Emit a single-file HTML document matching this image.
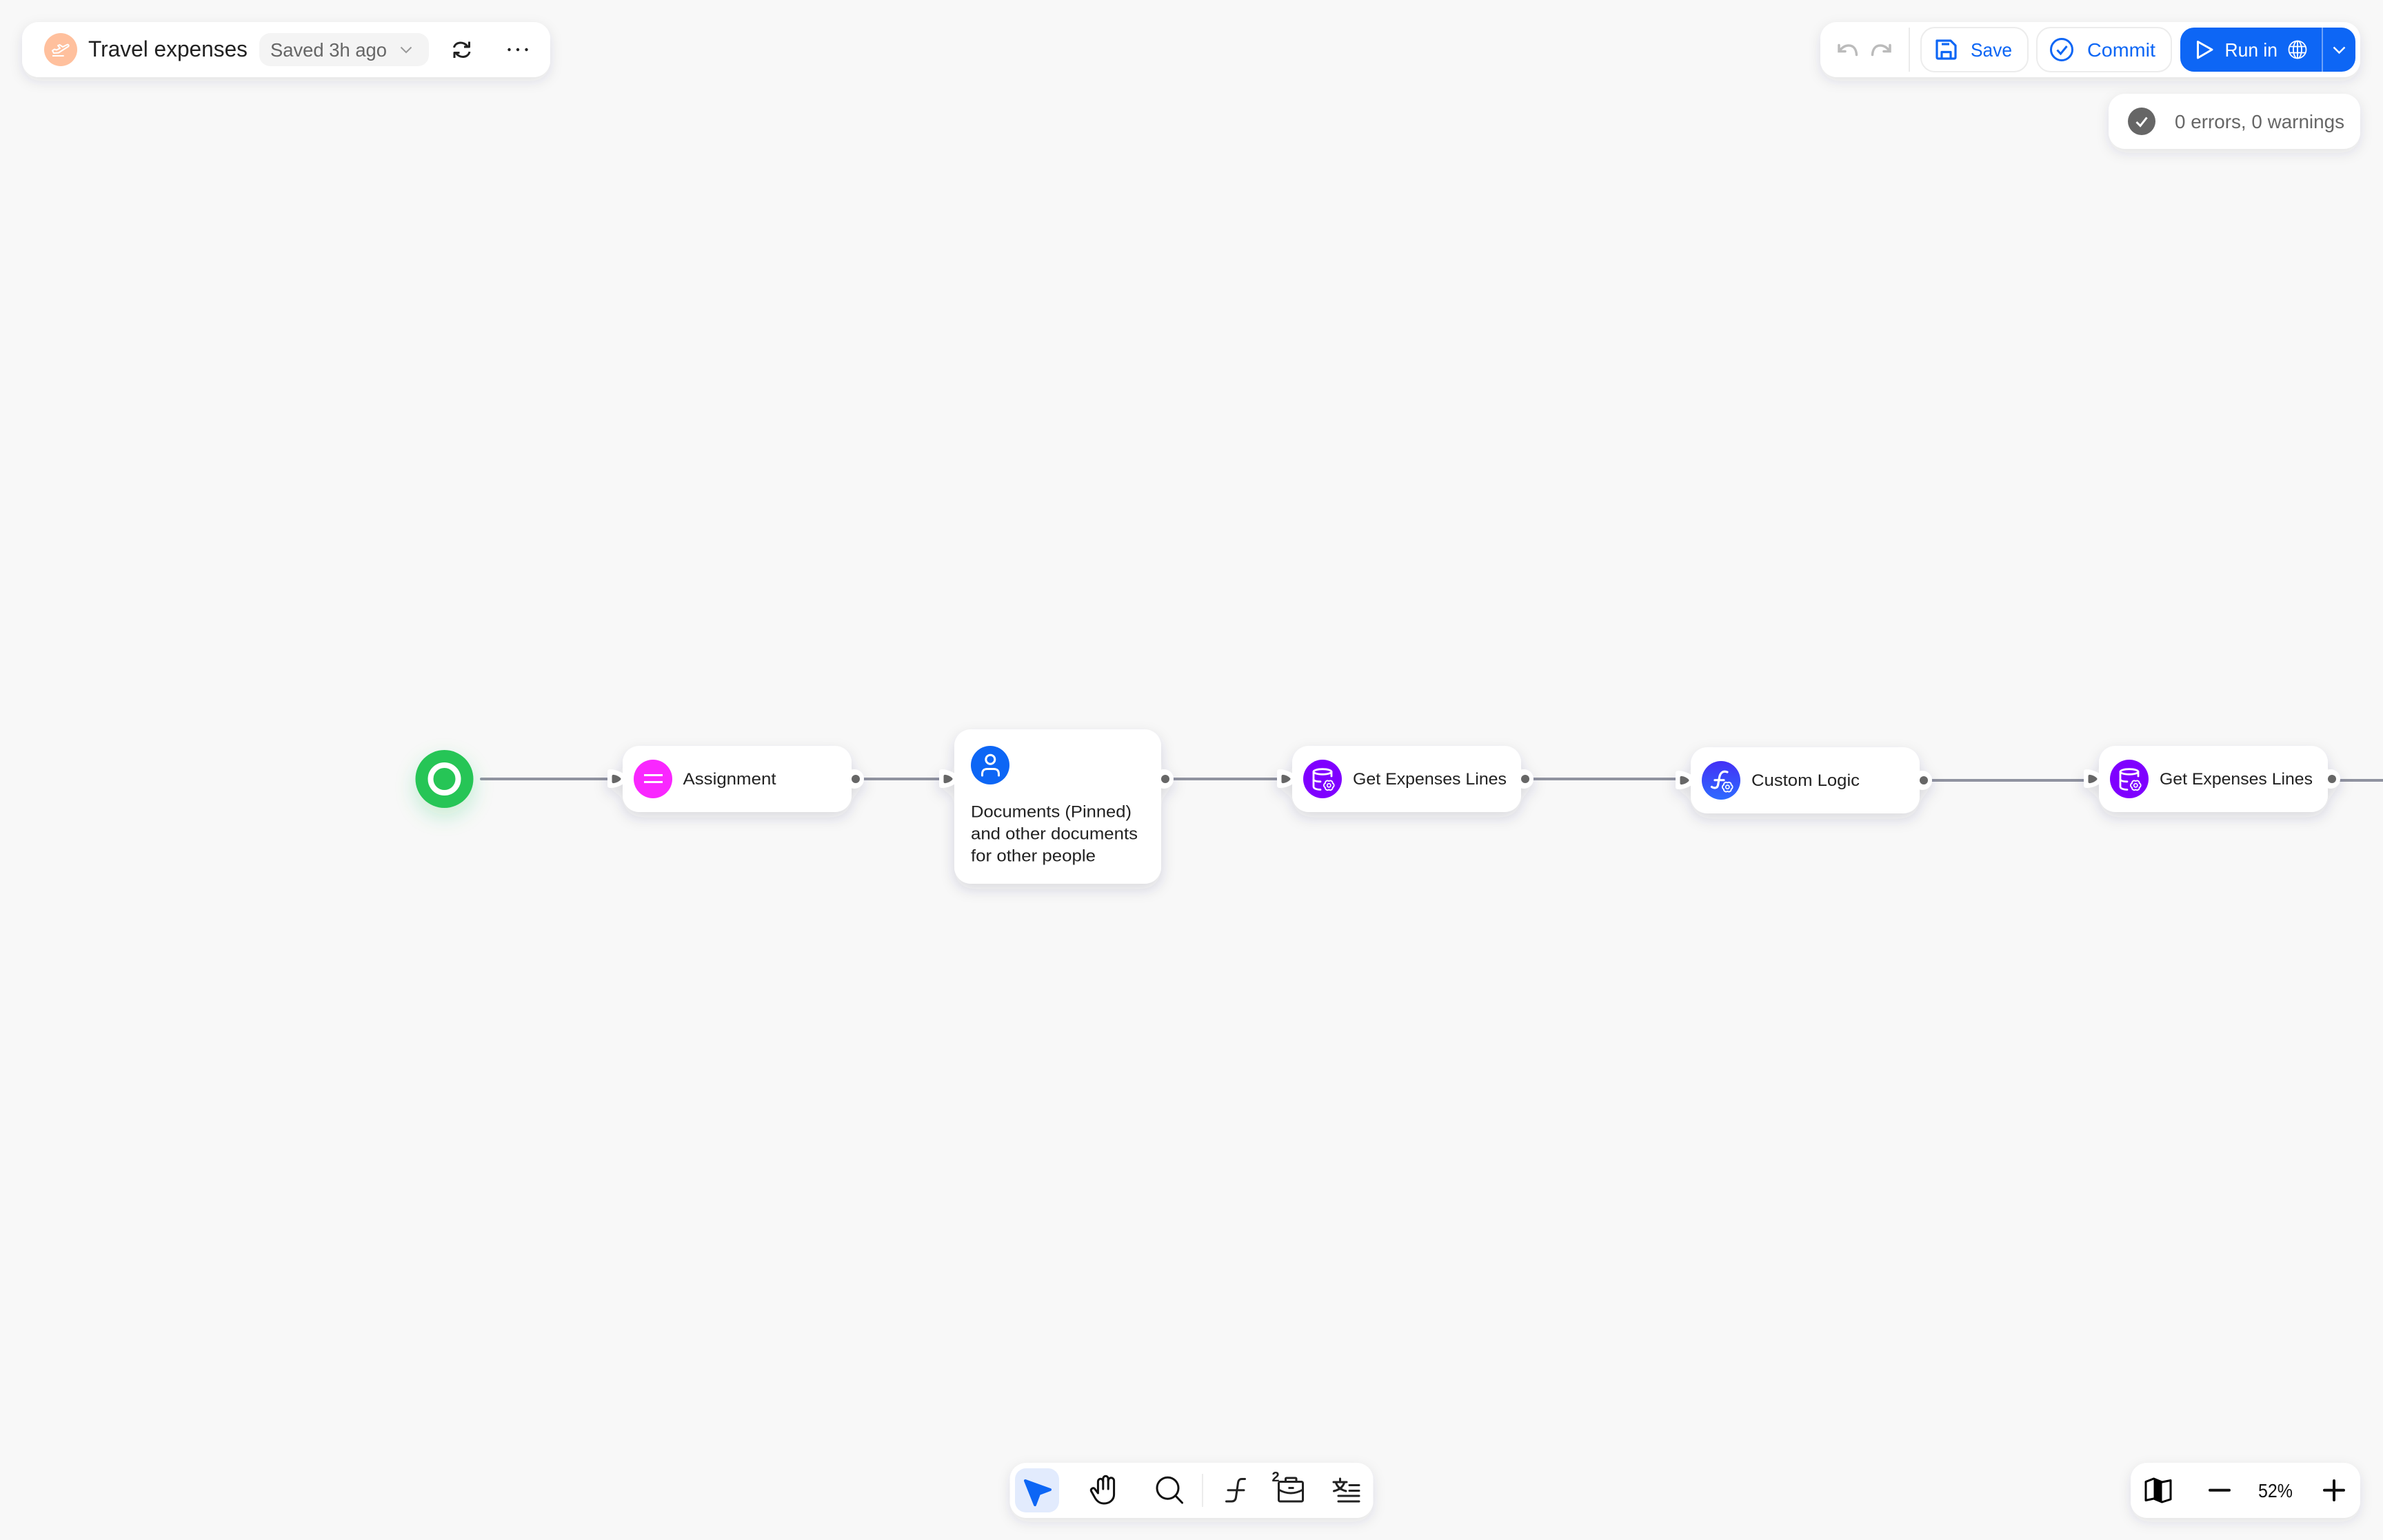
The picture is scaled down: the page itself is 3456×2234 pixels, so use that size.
<!DOCTYPE html>
<html lang="en">
<head>
<meta charset="utf-8">
<title>Travel expenses</title>
<style>
html,body{margin:0;padding:0;background:#f8f8f8;width:3456px;height:2234px;overflow:hidden}
svg{display:block}
text{font-family:"Liberation Sans",sans-serif;white-space:pre}
.n{font-size:24px;fill:#222}
.s{font-size:28px}
</style>
</head>
<body>
<svg xmlns="http://www.w3.org/2000/svg" width="3456" height="2234" viewBox="0 0 3456 2234">
<defs>
<filter id="p" x="-20%" y="-50%" width="140%" height="220%"><feDropShadow dx="0" dy="6" stdDeviation="9" flood-color="#2a3350" flood-opacity=".11"/></filter>
<filter id="nd" x="-20%" y="-40%" width="140%" height="200%"><feDropShadow dx="0" dy="8" stdDeviation="10" flood-color="#2a3350" flood-opacity=".15"/></filter>
<filter id="g" x="-80%" y="-80%" width="260%" height="280%"><feDropShadow dx="0" dy="12" stdDeviation="15" flood-color="#27c556" flood-opacity=".24"/></filter>
<linearGradient id="fg" x1="0" y1="0" x2="0" y2="1"><stop offset="0" stop-color="#4430f5"/><stop offset="1" stop-color="#2e6bff"/></linearGradient>
<path id="in" d="M1 -8 C-5 -11 -12 -14 -18 -14 Q-22 -14 -22 -10 V9 Q-22 13 -18 13 C-12 13 -5 11 1 7 Z" fill="#fff"/>
<path id="tri" d="M-15 -4 Q-15 -6 -13 -5.6 Q-7 -4.6 -3.5 -1 Q-2.5 0 -3.5 1 Q-7 4.6 -13 5.6 Q-15 6 -15 4 Z" fill="#666" stroke="#666" stroke-width="1"/>
<path id="gear" d="M5.37 -3.1 A3.4 3.4 0 0 1 5.37 3.1 A3.4 3.4 0 0 1 0 6.2 A3.4 3.4 0 0 1 -5.37 3.1 A3.4 3.4 0 0 1 -5.37 -3.1 A3.4 3.4 0 0 1 0 -6.2 A3.4 3.4 0 0 1 5.37 -3.1 Z"/>
<g id="db">
<circle r="28" fill="#7f00ff"/>
<g fill="none" stroke="#fff" stroke-width="2.8" stroke-linecap="round">
<ellipse cx="0" cy="-10.5" rx="13" ry="3.8"/>
<path d="M-13 -10.5 V11 C-13 14 -8 15.5 -3 15.5"/>
<path d="M-13 1 C-12 3 -8 3.8 -3 3.8"/>
<path d="M13 -10.5 V-4"/>
</g>
<g transform="translate(9.3 9.3)"><use href="#gear" fill="#7f00ff" stroke="#fff" stroke-width="1.8"/><circle r="2.6" fill="none" stroke="#fff" stroke-width="1.6"/></g>
</g>
</defs>

<rect width="3456" height="2234" fill="#f8f8f8"/>

<!-- connector lines -->
<g fill="#9093a0">
<rect x="696" y="1128" width="186" height="4" rx="2"/>
<rect x="1250" y="1128" width="116" height="4"/>
<rect x="1700" y="1128" width="154" height="4"/>
<rect x="2222" y="1128" width="208" height="4"/>
<rect x="2800" y="1130" width="224" height="4"/>
<rect x="3392" y="1130" width="64" height="4"/>
</g>

<!-- start node -->
<circle cx="644.5" cy="1130" r="42" fill="#27c556" filter="url(#g)"/>
<circle cx="644.5" cy="1130" r="20" fill="none" stroke="#fff" stroke-width="8"/>

<!-- Assignment node -->
<g filter="url(#nd)">
<rect x="903" y="1082" width="332" height="96" rx="24" fill="#fff"/>
<use href="#in" x="903" y="1130"/>
<circle cx="1239" cy="1130" r="14" fill="#fff"/>
</g>
<use href="#tri" x="903" y="1130"/>
<circle cx="1241" cy="1130" r="6" fill="#666"/>
<circle cx="947" cy="1130" r="28" fill="#f927ff"/>
<rect x="934" y="1123" width="27" height="3" fill="#fff"/>
<rect x="934" y="1133" width="27" height="3" fill="#fff"/>
<text class="n" x="990.500" y="1138" textLength="135" lengthAdjust="spacingAndGlyphs">Assignment</text>

<!-- Documents node -->
<g filter="url(#nd)">
<rect x="1384" y="1058" width="300" height="224" rx="24" fill="#fff"/>
<use href="#in" x="1384" y="1130"/>
<circle cx="1688" cy="1130" r="14" fill="#fff"/>
</g>
<use href="#tri" x="1384" y="1130"/>
<circle cx="1690" cy="1130" r="6" fill="#666"/>
<circle cx="1436" cy="1110" r="28" fill="#0d66f5"/>
<circle cx="1436.3" cy="1101.7" r="6.500" fill="none" stroke="#fff" stroke-width="3"/>
<path d="M1424.5 1125 V1123 C1424.5 1117 1428 1115.5 1432 1115.5 H1441 C1445 1115.5 1448.5 1117 1448.5 1123 V1125" fill="none" stroke="#fff" stroke-width="3" stroke-linecap="round"/>
<text class="n" x="1408" y="1185.500" textLength="233" lengthAdjust="spacingAndGlyphs">Documents (Pinned)</text>
<text class="n" x="1408" y="1217.500" textLength="242" lengthAdjust="spacingAndGlyphs">and other documents</text>
<text class="n" x="1408" y="1249.500" textLength="181" lengthAdjust="spacingAndGlyphs">for other people</text>

<!-- Get Expenses Lines 1 -->
<g filter="url(#nd)">
<rect x="1874" y="1082" width="332" height="96" rx="24" fill="#fff"/>
<use href="#in" x="1874" y="1130"/>
<circle cx="2210" cy="1130" r="14" fill="#fff"/>
</g>
<use href="#tri" x="1874" y="1130"/>
<circle cx="2212" cy="1130" r="6" fill="#666"/>
<use href="#db" x="1918" y="1130"/>
<text class="n" x="1962" y="1138" textLength="223" lengthAdjust="spacingAndGlyphs">Get Expenses Lines</text>

<!-- Custom Logic -->
<g filter="url(#nd)">
<rect x="2452" y="1084" width="332" height="96" rx="24" fill="#fff"/>
<use href="#in" x="2452" y="1132"/>
<circle cx="2788" cy="1132" r="14" fill="#fff"/>
</g>
<use href="#tri" x="2452" y="1132"/>
<circle cx="2790" cy="1132" r="6" fill="#666"/>
<circle cx="2496" cy="1132" r="28" fill="url(#fg)"/>
<g fill="none" stroke="#fff" stroke-width="3.200" stroke-linecap="round">
<path d="M2505 1120 C2498 1117.500 2494.500 1122 2493.500 1128 L2491.500 1139 C2490.500 1143.500 2486 1144 2482.500 1141.500"/>
<path d="M2487 1131.700 H2500"/>
</g>
<g transform="translate(2505.300 1141.700)"><use href="#gear" fill="#3560fb" stroke="#fff" stroke-width="1.800"/><circle r="2.600" fill="none" stroke="#fff" stroke-width="1.600"/></g>
<text class="n" x="2540" y="1140" textLength="157" lengthAdjust="spacingAndGlyphs">Custom Logic</text>

<!-- Get Expenses Lines 2 -->
<g filter="url(#nd)">
<rect x="3044" y="1082" width="332" height="96" rx="24" fill="#fff"/>
<use href="#in" x="3044" y="1130"/>
<circle cx="3380" cy="1130" r="14" fill="#fff"/>
</g>
<use href="#tri" x="3044" y="1130"/>
<circle cx="3382" cy="1130" r="6" fill="#666"/>
<use href="#db" x="3088" y="1130"/>
<text class="n" x="3132" y="1138" textLength="222" lengthAdjust="spacingAndGlyphs">Get Expenses Lines</text>

<!-- top left panel -->
<rect x="32" y="32" width="766" height="80" rx="24" fill="#fff" filter="url(#p)"/>
<circle cx="88" cy="72" r="24" fill="#ffc09d"/>
<path d="M76 73.500 L79 71.500 L82 72.500 L87 70 L84 66 L86.500 65 L91 68 L97 65 C99 64 100.500 66 99 67.500 L85 76.500 L78 77 Z" fill="none" stroke="#fff" stroke-width="2" stroke-linejoin="round"/>
<path d="M76 81 H92.700" stroke="#fff" stroke-width="2"/>
<text x="128" y="82" font-size="32" fill="#222" textLength="231" lengthAdjust="spacingAndGlyphs">Travel expenses</text>
<rect x="376" y="48" width="246" height="48" rx="16" fill="#f4f4f4"/>
<text class="s" x="392" y="82" fill="#666" textLength="169" lengthAdjust="spacingAndGlyphs">Saved 3h ago</text>
<path d="M581.500 68.500 L589 76 L596.500 68.500" fill="none" stroke="#999" stroke-width="2"/>
<g fill="none" stroke="#222" stroke-width="3" stroke-linejoin="round">
<path d="M658.500 69 C659.500 64 664 62 668 62 C672 62 675 63.500 678 67"/>
<path d="M680.500 60.500 V68 H673"/>
<path d="M681 75 C680 80 675.500 82.500 671.500 82.500 C667.500 82.500 664.500 81 661.500 77.500"/>
<path d="M659 84 V76.500 H666.500"/>
</g>
<circle cx="738.500" cy="72" r="2.200" fill="#222"/><circle cx="751" cy="72" r="2.200" fill="#222"/><circle cx="763.500" cy="72" r="2.200" fill="#222"/>

<!-- top right panel -->
<rect x="2640" y="32" width="783" height="80" rx="24" fill="#fff" filter="url(#p)"/>
<g fill="none" stroke="#bbb" stroke-width="3.500" stroke-linecap="round">
<path d="M2667 65.500 V74.500 H2676 M2667.500 74 C2672 68 2677 66 2681 66 C2688 66 2692 71 2692.500 79.500"/>
<path d="M2741 65.500 V74.500 H2732 M2740.500 74 C2736 68 2731 66 2727 66 C2720 66 2716 71 2715.500 79.500"/>
</g>
<rect x="2768" y="40" width="2" height="64" fill="#ebebeb"/>
<rect x="2786" y="40" width="155" height="64" rx="20" fill="#fff" stroke="#ececec" stroke-width="2"/>
<g fill="none" stroke="#0d66f5" stroke-width="3.200" stroke-linejoin="round">
<path d="M2809 59 H2829 L2836 66 V83 Q2836 85 2834 85 H2811 Q2809 85 2809 83 Z"/>
<path d="M2816 64 H2827"/>
<path d="M2816 85 V75.500 H2829 V85"/>
</g>
<text class="s" x="2858" y="82" fill="#0d66f5" textLength="60" lengthAdjust="spacingAndGlyphs">Save</text>
<rect x="2954" y="40" width="195" height="64" rx="20" fill="#fff" stroke="#ececec" stroke-width="2"/>
<circle cx="2990" cy="72" r="15.500" fill="none" stroke="#0d66f5" stroke-width="3"/>
<path d="M2983.500 72.500 L2988.500 78 L2997.500 67" fill="none" stroke="#0d66f5" stroke-width="3"/>
<text class="s" x="3027" y="82" fill="#0d66f5" textLength="99" lengthAdjust="spacingAndGlyphs">Commit</text>
<rect x="3162" y="40" width="254" height="64" rx="20" fill="#0d66f5"/>
<rect x="3367" y="40" width="2" height="64" fill="#6ea3f8"/>
<path d="M3187.500 60.500 L3208 72 L3187.500 84 Z" fill="none" stroke="#fff" stroke-width="3" stroke-linejoin="round"/>
<text class="s" x="3226.500" y="82" fill="#fff" textLength="76.500" lengthAdjust="spacingAndGlyphs">Run in</text>
<g fill="none" stroke="#fff" stroke-width="1.800">
<circle cx="3332" cy="72" r="12.500"/>
<ellipse cx="3332" cy="72" rx="6" ry="12.500"/>
<path d="M3332 59.500 V84.500 M3320.500 67.500 H3343.500 M3320.500 76.500 H3343.500"/>
</g>
<path d="M3384.500 68.500 L3392.500 76.500 L3400.500 68.500" fill="none" stroke="#fff" stroke-width="2.500"/>

<!-- errors panel -->
<rect x="3058" y="136" width="365" height="80" rx="24" fill="#fff" filter="url(#p)"/>
<circle cx="3106" cy="176" r="20" fill="#666"/>
<path d="M3098.500 177 L3104 182.500 L3113.500 170.500" fill="none" stroke="#fff" stroke-width="3"/>
<text class="s" x="3154" y="186" fill="#666" textLength="246" lengthAdjust="spacingAndGlyphs">0 errors, 0 warnings</text>

<!-- bottom toolbar -->
<rect x="1464.500" y="2122" width="527" height="80" rx="24" fill="#fff" filter="url(#p)"/>
<rect x="1472" y="2130" width="64" height="64" rx="16" fill="#e2ebfd"/>
<path d="M1487 2148 L1523 2161 L1507 2167 L1501 2183 Z" fill="#0d66f5" stroke="#0d66f5" stroke-width="4" stroke-linejoin="round"/>
<g fill="none" stroke="#111" stroke-width="3" stroke-linecap="round" stroke-linejoin="round">
<path d="M1592.400 2166 V2149 a3.700 3.700 0 0 1 7.400 0 V2145 a3.700 3.700 0 0 1 7.400 0 V2148 a4.200 4.200 0 0 1 8.400 0 V2168 C1615.600 2176 1609 2181 1601 2181 C1594 2181 1590 2177 1587 2171 L1582.500 2163 C1581.500 2160 1585 2157.500 1587.500 2159.500 L1592.400 2166"/>
<path d="M1599.800 2149 V2160 M1607.200 2146 V2160"/>
<circle cx="1693.500" cy="2158.700" r="15.500"/>
<path d="M1705 2170 L1714.500 2180"/>
</g>
<rect x="1743" y="2138" width="2" height="48" fill="#ececec"/>
<g fill="none" stroke="#222" stroke-width="3" stroke-linecap="round" stroke-linejoin="round">
<path d="M1805.500 2145.500 H1801 C1797 2145.500 1796 2148 1795.500 2151 L1792.500 2172 C1792 2175.500 1790 2178 1786 2178 H1778.500"/>
<path d="M1781 2161.700 H1804"/>
<rect x="1854.500" y="2149.500" width="35" height="28.500" rx="2"/>
<path d="M1864.500 2149 V2145.500 Q1864.500 2144 1866 2144 H1878.500 Q1880 2144 1880 2145.500 V2149"/>
<path d="M1854.500 2161 Q1872 2171 1889.500 2161"/>
<path d="M1957 2154.500 H1971 M1957 2162.500 H1971 M1941 2170 H1971 M1941 2178 H1971"/>
<path d="M1934 2150 H1953 M1943.500 2145 V2150 M1937.500 2151 C1939.500 2157 1944 2161 1952 2163 M1949.500 2151 C1947.500 2157 1943 2161 1934.500 2163"/>
</g>
<text x="1844.500" y="2149" font-size="20" fill="#222" font-weight="bold">2</text>
<rect x="1868.500" y="2157" width="8" height="3" fill="#222"/>

<!-- zoom panel -->
<rect x="3090" y="2122" width="333" height="80" rx="24" fill="#fff" filter="url(#p)"/>
<path d="M3123.500 2145 L3135.500 2150 V2179 L3123.500 2174 Z" fill="#000"/>
<path d="M3112 2149.500 L3123.500 2145 L3135.500 2150 L3148 2147.500 V2175 L3135.500 2179 L3123.500 2174 L3112 2176.500 Z" fill="none" stroke="#000" stroke-width="3" stroke-linejoin="round"/>
<path d="M3205 2161.700 H3233 M3371 2161.700 H3399 M3385 2148 V2176" fill="none" stroke="#111" stroke-width="4" stroke-linecap="round"/>
<text class="s" x="3275" y="2172" fill="#111" textLength="50" lengthAdjust="spacingAndGlyphs">52%</text>
</svg>
</body>
</html>
